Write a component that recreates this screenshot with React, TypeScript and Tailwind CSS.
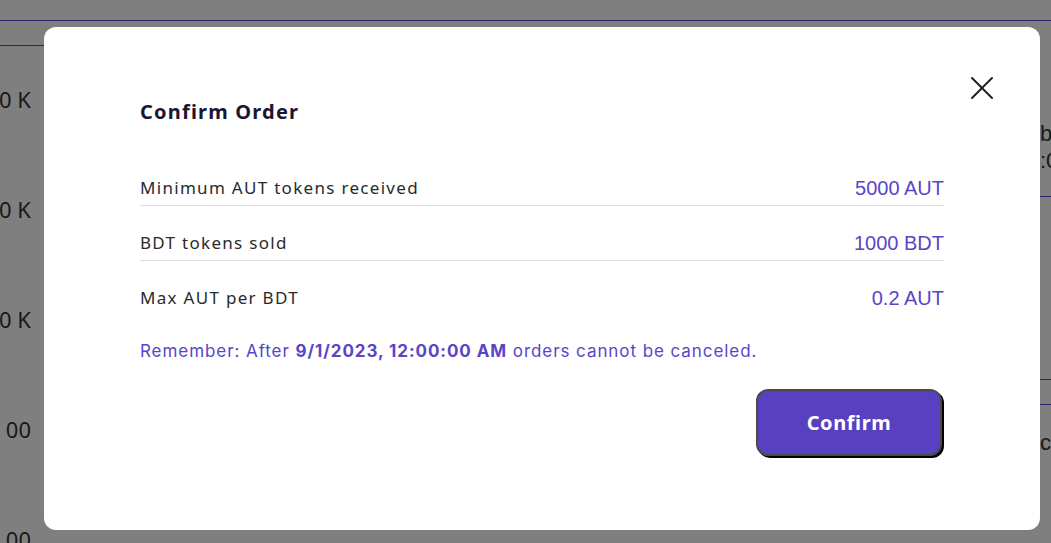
import { X } from 'lucide-react';

export default function App() {
  const rows = [
    { label: "Minimum AUT tokens received", value: "5000 AUT" },
    { label: "BDT tokens sold", value: "1000 BDT" },
    { label: "Max AUT per BDT", value: "0.2 AUT" },
  ];

  return (
    <div className="relative w-[1051px] h-[543px] overflow-hidden bg-white font-['Noto_Sans',sans-serif]">
      {/* page behind the dialog */}
      <div className="h-[20px]" />
      <div className="h-px bg-[#5a48e0]" />
      <div className="flex">
        <div className="w-[44px] mt-[24px] border-t border-[#5a48e0] overflow-hidden">
          <div className="w-[31px] flex flex-col items-end gap-[86px] pt-[41px] text-[22px] text-[#333] leading-[24px] whitespace-nowrap">
            <span>00 K</span>
            <span>00 K</span>
            <span>00 K</span>
            <span>00</span>
            <span>00</span>
          </div>
        </div>
        <div className="flex-1" />
        <div className="w-[11px] pt-[99px] text-[22px] leading-[27px] text-[#333] font-['Liberation_Sans',sans-serif] whitespace-nowrap">
          <div>b</div>
          <div>:0</div>
          <div className="mt-[22px] h-px bg-[#5a48e0]" />
          <div className="mt-[182px] h-px bg-[#5a48e0]" />
          <div className="mt-[24px] h-px bg-[#5a48e0]" />
          <div className="mt-[24px]">c</div>
        </div>
      </div>

      {/* overlay */}
      <div className="absolute inset-0 bg-black/50" />

      {/* dialog */}
      <div className="absolute left-[44px] top-[27px] w-[996px] h-[503px] rounded-[12px] bg-white px-[96px] pt-[70px]">
        <button className="absolute right-[38px] top-[41px] text-[#1f1f1f]">
          <X size={40} strokeWidth={1.2} />
        </button>
        <h2 className="text-[20px] leading-[30px] font-bold text-[#1b1535] tracking-[1.2px]">
          Confirm Order
        </h2>
        <div className="mt-[24px]">
          {rows.map((row, i) => (
            <div
              key={i}
              className={`flex items-center justify-between pt-[25px] pb-[5px] ${i < rows.length - 1 ? "border-b border-[#dedede]" : ""}`}
            >
              <span className="text-[17px] leading-[24px] text-[#2a2a2a] tracking-[1.3px]">{row.label}</span>
              <span className="text-[20px] leading-[24px] text-[#5a45c8] font-['Liberation_Sans',sans-serif]">
                {row.value}
              </span>
            </div>
          ))}
        </div>
        <p className="mt-[24px] text-[17px] leading-[24px] text-[#5a45c8] font-['Inter',sans-serif] tracking-[0.93px]">
          Remember: After <span className="font-bold">9/1/2023, 12:00:00 AM</span> orders cannot be canceled.
        </p>
        <div className="flex justify-end mt-[26px] pr-[2px]">
          <button className="w-[186px] h-[67px] rounded-[12px] bg-[#5940c0] border-2 border-[#4a4a4a] shadow-[2px_2px_0_#000] text-white text-[20px] font-bold tracking-[0.6px]">
            Confirm
          </button>
        </div>
      </div>
    </div>
  );
}
